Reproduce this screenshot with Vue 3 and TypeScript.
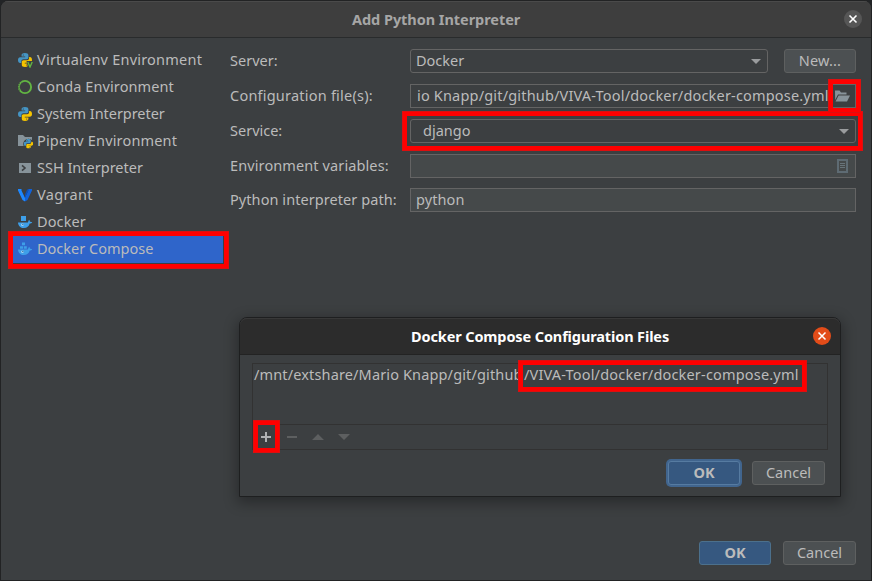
<script setup lang="ts">
interface Env {
  label: string
  icon: string
  cls: string
}

const environments: Env[] = [
  { label: 'Virtualenv Environment', icon: 'venv', cls: 'e1' },
  { label: 'Conda Environment', icon: 'conda', cls: 'e2' },
  { label: 'System Interpreter', icon: 'python', cls: 'e3' },
  { label: 'Pipenv Environment', icon: 'pipenv', cls: 'e4' },
  { label: 'SSH Interpreter', icon: 'ssh', cls: 'e5' },
  { label: 'Vagrant', icon: 'vagrant', cls: 'e6' },
  { label: 'Docker', icon: 'docker', cls: 'e7' },
  { label: 'Docker Compose', icon: 'compose', cls: 'e8' },
]
const selected = 'compose'
</script>

<template>
  <div class="window">
    <svg class="defs" width="0" height="0">
      <symbol id="py" viewBox="0 0 14 14">
        <path fill="#4595c4" d="M7 0C4.300 0 3.600 1 3.600 2.200v1.400h3.600v.6H2.200C.8 4.200 0 5.300 0 7c0 1.800.8 3 2.100 3H3.300V8.400C3.300 7.100 4.300 6.300 5.500 6.300h3.200c1 0 1.700-.8 1.700-1.700V2.200C10.400.800 9.200 0 7 0z" />
        <circle cx="5.300" cy="2" r=".6" fill="#3c3f41" />
        <path fill="#f5c400" d="M7 14c2.700 0 3.400-1 3.400-2.200v-1.400H6.800v-.6h5c1.400 0 2.200-1.100 2.200-2.800 0-1.800-.8-3-2.100-3h-.8v1.200c0 1.200-.9 2-2 2H5.500c-1 0-1.700.8-1.700 1.700v2.900C3.800 13.200 4.800 14 7 14z" />
        <circle cx="8.700" cy="12" r=".6" fill="#3c3f41" />
      </symbol>
    </svg>

    <header class="titlebar">
      <span class="title t-main">Add Python Interpreter</span>
      <span class="close">
        <svg width="18" height="18" viewBox="0 0 18 18"><path d="M5.500 5.500l7 7M12.500 5.500l-7 7" stroke="#fff" stroke-width="1.600" /></svg>
      </span>
    </header>

    <main class="content">
      <ul class="sidebar">
        <li v-for="env in environments" :key="env.icon" :class="{ selected: env.icon === selected }">
          <svg class="icon" width="16" height="16" viewBox="0 0 16 16">
            <template v-if="env.icon === 'venv'">
              <use href="#py" x="1" y="1" width="14" height="14" />
              <path d="M9.500 9h6.500v7h-5z" fill="#3c3f41" />
              <path d="M10.800 10l2.200 5 2.200-5" fill="none" stroke="#62b543" stroke-width="1.400" />
            </template>
            <template v-else-if="env.icon === 'conda'">
              <circle cx="8" cy="8" r="6.100" fill="none" stroke="#62b543" stroke-width="1.900" />
              <path d="M.8 6.500l1.800.4M1.500 4l1.600 1M.8 9l1.900-.2M3.200 1.800l1 1.500M1.500 11.700l1.500-.9" stroke="#3c3f41" stroke-width=".7" />
            </template>
            <use v-else-if="env.icon === 'python'" href="#py" x="1" y="1" width="14" height="14" />
            <template v-else-if="env.icon === 'pipenv'">
              <path d="M1 2h5l2 2h7v9H1z" fill="#87939a" />
              <circle cx="11.500" cy="11" r="5.300" fill="#3c3f41" />
              <use href="#py" x="6.700" y="6" width="9.500" height="9.500" />
            </template>
            <template v-else-if="env.icon === 'ssh'">
              <path d="M2 3h12v10H2z" fill="#87939a" />
              <path d="M5 5.300L8 8l-3 2.700" fill="none" stroke="#3c3f41" stroke-width="1.600" />
            </template>
            <template v-else-if="env.icon === 'vagrant'">
              <path d="M1 2h3.500v1.500L8 11v3.500L5.500 13 1 3.500z" fill="#1e88ff" />
              <path d="M15 2h-3.800v1.500L8 10.500v4l2.500-1.500L15 3.500z" fill="#1162d8" />
              <path d="M10 2.800L11.500 2v1.500L8 11V7.500z" fill="#0e4fb5" />
            </template>
            <template v-else>
              <path v-if="env.icon === 'docker'" d="M4 2h5v5H4z" fill="#3e9fe8" />
              <path v-else d="M5 1.500h3v2.700H5zM3 5.200h3v2.600H3zM6.800 5.200h3v2.600h-3z" fill="#3e9fe8" />
              <path d="M1 8.500h10c.2-1 .4-1.900 1.100-2.700.6.6.9 1.200.9 1.900.8-.1 1.500.1 2.200.5-.6 1-1.500 1.300-2.500 1.300-.8 2.800-2.700 4.500-5.800 4.500C3.500 14 1.200 12 1 8.500z" fill="#3e9fe8" />
              <circle cx="5.400" cy="10.700" r="1.300" fill="#a5d5f5" /><circle cx="5.800" cy="10.400" r=".6" fill="#31618a" />
            </template>
          </svg>
          <span :class="env.cls">{{ env.label }}</span>
        </li>
      </ul>

      <section class="form">
        <div class="row">
          <label class="l1">Server:</label>
          <div class="combo grow"><span class="v1">Docker</span><i class="arrow" /></div>
          <button class="btn wide new"><span class="b-new">New...</span></button>
        </div>
        <div class="row">
          <label class="l2">Configuration file(s):</label>
          <div class="field path grow">
            <span class="v2">io Knapp/git/github/VIVA-Tool/docker/docker-compose.yml</span>
            <svg class="folder" width="16" height="16" viewBox="0 0 16 16"><path d="M1 2.500h4.500L7 4.500h5.500v2H4L1.200 12z" fill="#87939a" /><path d="M4.600 7.500H16L13 13.500H1.500z" fill="#87939a" /></svg>
          </div>
        </div>
        <div class="row">
          <label class="l3">Service:</label>
          <div class="combo service grow"><span class="v3">django</span><i class="arrow" /></div>
        </div>
        <div class="row">
          <label class="l4">Environment variables:</label>
          <div class="field light grow">
            <svg class="doc" width="11" height="14" viewBox="0 0 11 14"><path d="M1 1h9v12H1z" fill="none" stroke="#5e6b73" stroke-width="2" /><path d="M3 4.500h5M3 6.500h5M3 8.500h5" stroke="#68747a" /></svg>
          </div>
        </div>
        <div class="row last">
          <label class="l5">Python interpreter path:</label>
          <div class="field light grow"><span class="v4">python</span></div>
        </div>
      </section>
    </main>

    <footer class="actions">
      <button class="btn primary wide"><span class="b-ok">OK</span></button>
      <button class="btn cancel"><span class="b-cancel">Cancel</span></button>
    </footer>

    <i class="mark m-compose" />
    <i class="mark m-service" />
    <i class="mark m-folder" />

    <div class="dialog">
      <header class="dialog-title">
        <span class="title t-dialog">Docker Compose Configuration Files</span>
        <span class="close orange">
          <svg width="18" height="18" viewBox="0 0 18 18"><path d="M5.500 5.500l7 7M12.500 5.500l-7 7" stroke="#fff" stroke-width="1.500" /></svg>
        </span>
      </header>
      <div class="list">
        <div class="list-body"><span class="p1">/mnt/extshare/Mario Knapp/git/github</span><span class="p2">/VIVA-Tool/docker/docker-compose.yml</span></div>
        <div class="toolbar">
          <svg width="110" height="24" viewBox="0 0 110 24">
            <path d="M8 12h10M13 7v10" stroke="#afb1b3" stroke-width="2" />
            <path d="M34 12h10" stroke="#5d5f60" stroke-width="2" />
            <path d="M59 15h12l-6-6zM85 9h12l-6 6z" fill="#5d5f60" />
          </svg>
        </div>
      </div>
      <footer class="dialog-actions">
        <button class="btn primary wide focused"><span class="b-ok">OK</span></button>
        <button class="btn cancel"><span class="b-cancel">Cancel</span></button>
      </footer>
    </div>
    <i class="mark m-path" />
    <i class="mark m-plus" />
  </div>
</template>

<style>
body {
  background: #222426;
}
</style>

<style scoped>
* {
  box-sizing: border-box;
}
.window {
  position: relative;
  width: 872px;
  height: 581px;
  display: flex;
  flex-direction: column;
  overflow: hidden;
  border: 1px solid #222324;
  border-radius: 8px 8px 0 0;
  background: #3c3f41;
  color: #bbbbbb;
  font: 14.500px/20px "Noto Sans", "Open Sans", sans-serif;
  white-space: nowrap;
}
.defs {
  position: absolute;
}
span,
label {
  display: block;
}
.titlebar,
.dialog-title {
  display: flex;
  flex: none;
  align-items: center;
  justify-content: flex-end;
  font-weight: 700;
}
.titlebar {
  height: 37px;
  padding: 0 9px 1px 0;
  background: #3e3e3e;
  border-top: 1px solid #4a4a4a;
  border-bottom: 1px solid #292b2c;
}
.title {
  flex: 1;
  padding-bottom: 1px;
}
.t-main {
  padding-left: 351px;
  color: #a6a6a6;
  letter-spacing: -0.05px;
}
.close {
  width: 18px;
  height: 18px;
  border-radius: 50%;
  background: #565656;
}
.close.orange {
  background: #e24c19;
}
.content {
  display: flex;
  flex: 1;
  padding: 8px 15px 0 12px;
}
.sidebar {
  width: 210px;
  margin: 0 7px 0 0;
  padding: 1px 0 0;
  list-style: none;
}
.sidebar li {
  display: flex;
  align-items: center;
  gap: 4px;
  height: 27px;
  padding: 0 0 1px 4px;
}
.sidebar li.selected {
  background: #2f65ca;
}
.sidebar span {
  padding-bottom: 2px;
}
.e1 {
  letter-spacing: 0.22px;
}
.e2 {
  letter-spacing: 0.1px;
}
.e3 {
  letter-spacing: -0.04px;
}
.e4 {
  letter-spacing: 0.16px;
}
.e6 {
  letter-spacing: 0.35px;
}
.e7 {
  letter-spacing: 0.12px;
}
.icon {
  flex: none;
}
.form {
  flex: 1;
  min-width: 0;
  padding-top: 3px;
}
.row {
  display: flex;
  height: 24px;
  margin-bottom: 11px;
}
.row label {
  width: 180px;
  line-height: 22px;
}
.l2 {
  letter-spacing: 0.22px;
}
.l4 {
  letter-spacing: 0.11px;
}
.l5 {
  letter-spacing: 0.07px;
}
.row.last {
  margin-top: -1px;
}
.combo,
.field {
  display: flex;
  align-items: center;
  border: 1px solid #646464;
  padding-left: 5px;
}
.combo span,
.field span,
.btn span {
  padding-bottom: 2px;
}
.combo {
  border-radius: 3px;
  justify-content: space-between;
  padding-right: 6px;
}
.grow {
  flex: 1;
  min-width: 0;
}
.service {
  padding-left: 12px;
}
.path {
  justify-content: space-between;
  padding: 0 5px 0 6px;
}
.v2 {
  letter-spacing: 0.18px;
}
.v4 {
  letter-spacing: 0.1px;
}
.folder {
  flex: none;
}
.light {
  background: #45494a;
}
.arrow {
  width: 10px;
  height: 5px;
  margin-top: 1px;
  background: #9a9c9e;
  clip-path: polygon(0 0, 100% 0, 50% 100%);
}
.doc {
  margin: 0 7px 0 auto;
}
.btn {
  display: flex;
  align-items: center;
  justify-content: center;
  width: 73px;
  height: 24px;
  padding: 0;
  border: 1px solid #5e6060;
  border-radius: 3px;
  background: #4c5052;
  color: #bbbbbb;
  font: inherit;
}
.wide {
  width: 72px;
}
.new {
  flex: none;
  margin-left: 16px;
}
.b-new {
  letter-spacing: 0.15px;
}
.primary {
  background: #365880;
  border-color: #4c708c;
  font-weight: 700;
}
.actions {
  display: flex;
  gap: 12px;
  justify-content: flex-end;
  padding: 0 15px 15px 0;
}
.dialog {
  position: absolute;
  left: 238px;
  top: 316px;
  width: 602px;
  height: 180px;
  border: 1px solid #1e1f20;
  border-radius: 8px 8px 0 0;
  background: #3c3f41;
  box-shadow: 0 4px 14px 2px rgba(0, 0, 0, 0.32);
}
.dialog-title {
  height: 37px;
  padding: 0 9px 1px 0;
  border-top: 1px solid #383838;
  border-bottom: 1px solid #232323;
  border-radius: 7px 7px 0 0;
  background: #2c2c2c;
  color: #ffffff;
}
.t-dialog {
  padding-left: 171px;
  letter-spacing: -0.12px;
}
.list {
  width: 576px;
  height: 87px;
  margin: 8px 0 0 12px;
  border: 1px solid #323232;
}
.list-body {
  display: flex;
  height: 60px;
  padding: 0 0 0 1px;
}
.p1 {
  width: 270px;
  letter-spacing: 0.14px;
}
.p2 {
  letter-spacing: 0.18px;
}
.toolbar {
  height: 25px;
  border-top: 1px solid #323232;
}
.toolbar svg {
  display: block;
}
.dialog-actions {
  display: flex;
  gap: 12px;
  justify-content: flex-end;
  padding: 11px 15px 0 0;
}
.focused {
  box-shadow: 0 0 0 2px #41658e;
  border-color: #567ba1;
}
.mark {
  position: absolute;
  border: 5px solid #ff0000;
  outline: 1px solid rgba(210, 20, 20, 0.75);
  outline-offset: -1px;
}
.m-compose {
  left: 7px;
  top: 230px;
  width: 221px;
  height: 38px;
}
.m-service {
  left: 401px;
  top: 110px;
  width: 461px;
  height: 40px;
}
.m-folder {
  left: 827px;
  top: 78px;
  width: 33px;
  height: 34px;
}
.m-path {
  left: 517px;
  top: 359px;
  width: 289px;
  height: 32px;
}
.m-plus {
  left: 252px;
  top: 419px;
  width: 27px;
  height: 33px;
}
</style>
